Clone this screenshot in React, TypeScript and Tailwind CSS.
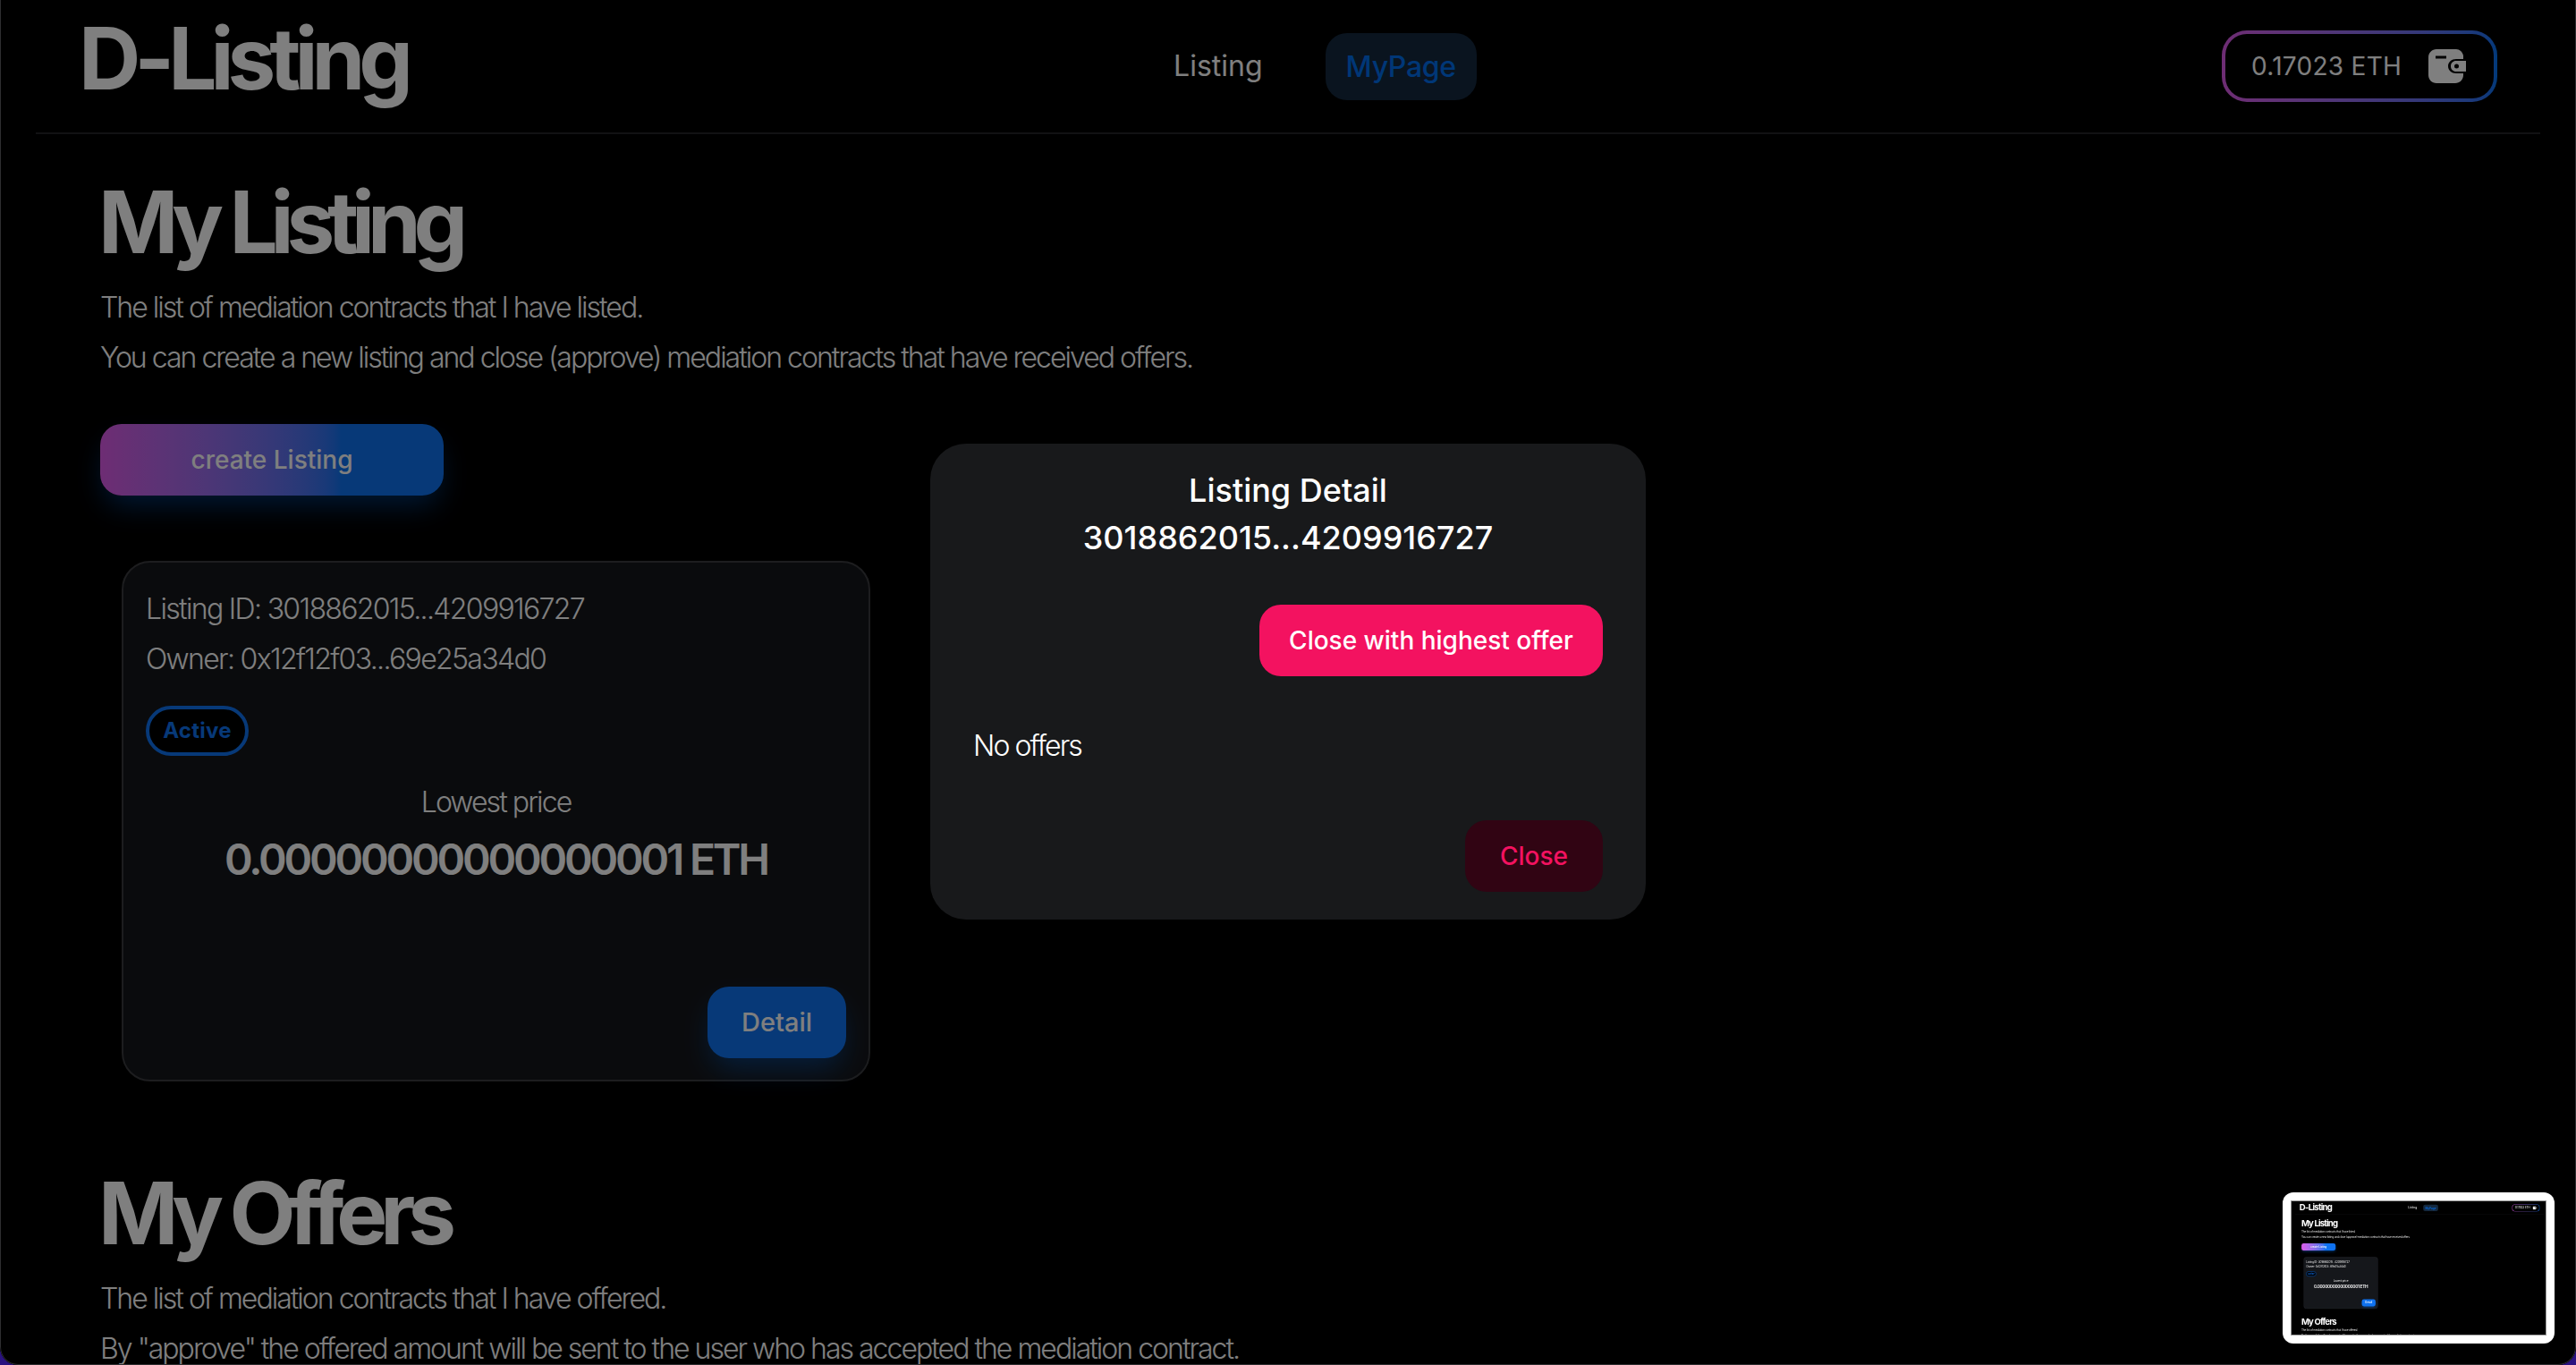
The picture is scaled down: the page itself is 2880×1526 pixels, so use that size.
const font = { fontFamily: "Inter, sans-serif" };

function WalletIcon() {
  return (
    <svg width="42" height="38" viewBox="0 0 42 38" fill="currentColor">
      <path
        fillRule="evenodd"
        d="M9 0H31C35 0 38 3 39 7V11H31C26 11 22 14.500 22 19C22 23.500 26 27 31 27H39V29C39 34 35 38 30 38H9C4 38 0 34 0 29V9C0 4 4 0 9 0ZM8 7.500V10.500H20V7.500H8Z"
      />
      <path
        fillRule="evenodd"
        d="M31 13H42V25H31C27.500 25 25 22.500 25 19C25 15.500 27.500 13 31 13ZM31.500 16.500A2.500 2.500 0 1 0 31.500 21.500A2.500 2.500 0 1 0 31.500 16.500Z"
      />
    </svg>
  );
}

function Header() {
  return (
    <div className="mx-[40px] flex h-[150px] items-center justify-between border-b-2 border-[#222326] pl-[48px] pr-[48px]">
      <div className="-mt-[18px] text-[96px] font-bold leading-[120px] tracking-[-0.073em] text-white">D-Listing</div>
      <div className="flex items-center">
        <div className="px-[24px] py-[18px] text-[32px] leading-[40px] text-white">Listing</div>
        <div className="ml-[46px] rounded-[24px] bg-[#14283e] px-[23px] py-[18px] text-[32px] font-medium leading-[39px] tracking-[-0.01em] text-[#006fee]">MyPage</div>
      </div>
      <div className="rounded-[28px] bg-gradient-to-r from-[#dc5ae8] to-[#0072f5] p-[4px]">
        <div className="flex h-[72px] w-[300px] items-center gap-[30px] rounded-[24px] bg-black pl-[29px] text-[28px] tracking-[0.01em] text-white">
          <span>0.17023 ETH</span>
          <WalletIcon />
        </div>
      </div>
    </div>
  );
}

function SectionIntro({ title, lines, top }: { title: string; lines: string[]; top: string }) {
  return (
    <div className={top}>
      <h1 className="-ml-[2px] text-[96px] font-bold leading-[120px] tracking-[-0.085em] text-white">{title}</h1>
      <div className="mt-[20px] space-y-[24px] text-[32px] font-light leading-[32px] tracking-[-0.062em] text-white">
        {lines.map((line) => (
          <p key={line}>{line}</p>
        ))}
      </div>
    </div>
  );
}

function ListingCard() {
  return (
    <div className="ml-[24px] mt-[73px] flex h-[582px] w-[837px] flex-col rounded-[32px] border-2 border-[#3a3b3e] bg-[#15171b] px-[25px] pt-[24px]">
      <div className="text-[32px] font-light leading-[56px] tracking-[-0.052em] text-white">
        <p>Listing ID: 3018862015...4209916727</p>
        <p>Owner: 0x12f12f03...69e25a34d0</p>
      </div>
      <div className="mt-[24px] flex h-[56px] w-[115px] items-center justify-center rounded-full border-4 border-[#0f72f0] bg-black text-[24px] font-bold tracking-[0.01em] text-[#0f72f0]">
        Active
      </div>
      <div className="mt-[24px] text-center text-[32px] font-light leading-[56px] tracking-[-0.06em] text-white">Lowest price</div>
      <div className="mt-[6px] text-center text-[48px] font-semibold leading-[60px] tracking-[-0.066em] text-white">0.00000000000000001 ETH</div>
      <div className="mt-auto mb-[24px] flex justify-end">
        <div className="flex h-[80px] w-[155px] items-center justify-center rounded-[24px] bg-[#0f72f0] text-[29px] font-medium text-white shadow-[0_16px_32px_-6px_rgba(0,111,238,0.45)]">
          Detail
        </div>
      </div>
    </div>
  );
}

function Page() {
  return (
    <div className="h-[1526px] w-[2880px] overflow-hidden bg-black" style={font}>
      <Header />
      <div className="pl-[112px]">
        <SectionIntro
          title="My Listing"
          top="mt-[38px]"
          lines={[
            "The list of mediation contracts that I have listed.",
            "You can create a new listing and close (approve) mediation contracts that have received offers.",
          ]}
        />
        <div className="mt-[58px] flex h-[80px] w-[384px] items-center justify-center rounded-[24px] bg-gradient-to-r from-[#dc5ae8] to-[#0f72f0] to-70% text-[28px] font-medium text-white shadow-[0_16px_32px_-6px_rgba(0,111,238,0.45)]">
          create Listing
        </div>
        <ListingCard />
        <SectionIntro
          title="My Offers"
          top="mt-[87px]"
          lines={[
            "The list of mediation contracts that I have offered.",
            'By "approve" the offered amount will be sent to the user who has accepted the mediation contract.',
          ]}
        />
      </div>
    </div>
  );
}

function DetailModal() {
  return (
    <div className="absolute inset-0 flex items-center justify-center bg-black/50" style={font}>
      <div className="mb-[2px] h-[532px] w-[800px] rounded-[40px] bg-[#18191b] px-[48px] pt-[26px] text-white">
        <div className="text-center text-[36px] font-medium leading-[53px]">
          <div>Listing Detail</div>
          <div>3018862015...4209916727</div>
        </div>
        <div className="mt-[48px] flex justify-end">
          <div className="flex h-[80px] w-[384px] items-center justify-center rounded-[24px] bg-[#f31260] text-[28px] font-medium">
            Close with highest offer
          </div>
        </div>
        <div className="mt-[50px] text-[32px] font-light leading-[56px] tracking-[-0.06em]">No offers</div>
        <div className="mt-[55px] flex justify-end">
          <div className="flex h-[80px] w-[154px] items-center justify-center rounded-[24px] bg-[#310413] text-[28px] font-medium text-[#f31260]">
            Close
          </div>
        </div>
      </div>
    </div>
  );
}

function Thumbnail() {
  return (
    <div className="absolute left-[2552px] top-[1333px] rounded-[12px] bg-white p-[9px]">
      <div className="h-[151px] w-[286px] overflow-hidden border border-[#9a9a9a]">
        <div className="origin-top-left scale-[0.0993] blur-[8px]">
          <Page />
        </div>
      </div>
    </div>
  );
}

export default function App() {
  return (
    <div className="h-[1526px] w-[2880px] overflow-hidden bg-[#2a1280]">
      <div className="relative h-[1526px] overflow-hidden rounded-b-[20px]">
        <Page />
        <DetailModal />
        <Thumbnail />
        <div className="pointer-events-none absolute inset-0 rounded-b-[20px] border border-t-0 border-[#2e2e30]" />
      </div>
    </div>
  );
}
